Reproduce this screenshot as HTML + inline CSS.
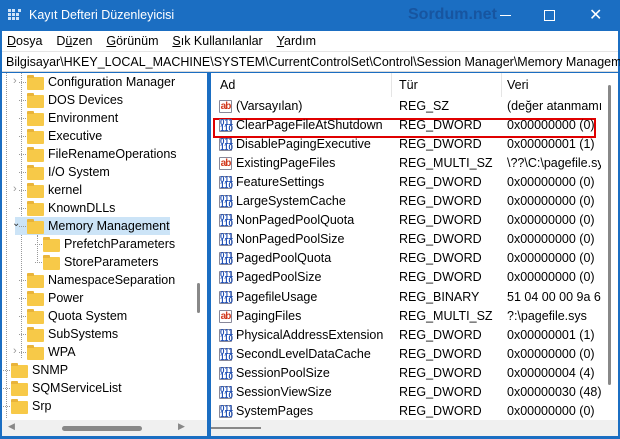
<!DOCTYPE html><html><head><meta charset="utf-8"><style>
*{margin:0;padding:0;box-sizing:border-box}
body{width:620px;height:439px;overflow:hidden;background:#1b6ec2;font-family:"Liberation Sans",sans-serif;font-size:12px;color:#000;position:relative}
.a{position:absolute;white-space:nowrap}
.title{left:0;top:0;width:620px;height:31px;background:#1b6ec2;color:#fff}
.menu{left:2px;top:31px;width:616px;height:20px;background:#fff}
.addr{left:2px;top:51px;width:616px;height:21px;background:#fff;border-top:1px solid #e5e5e5;border-bottom:1px solid #d8d8d8;line-height:20px;padding-left:4px;font-size:12.5px}
.lp{left:2px;top:73px;width:205px;height:363px;background:#fff}
.rp{left:211px;top:73px;width:407px;height:363px;background:#fff}
.f{position:absolute;width:17px;height:13px;background:#f7c948;border-radius:1px}
.f:before{content:"";position:absolute;left:0;top:-2px;width:7px;height:3px;background:#e9b43a;border-radius:1px 1px 0 0}
.t{position:absolute;font-size:12.5px;line-height:18px;white-space:nowrap}
.dot{position:absolute;border-left:1px dotted #999}
.hd{position:absolute;border-top:1px dotted #999}
.ic{position:absolute;width:13px;height:13px;font-size:8px;font-weight:bold;line-height:6px;text-align:center;border:1px solid #889;border-radius:1px;background:#fff;color:#1f4fb5}
.ab{color:#d23a1e;font-size:10px;line-height:11px;letter-spacing:-1px}
</style></head><body>
<div class="a title">
<svg class="a" style="left:8px;top:9px" width="14" height="14"><g fill="#cfe3f8"><rect x="0" y="0" width="3" height="3"/><rect x="4" y="0" width="3" height="3"/><rect x="0" y="4" width="3" height="3"/><rect x="4" y="4" width="3" height="3"/><rect x="8" y="4" width="3" height="3"/><rect x="0" y="8" width="3" height="3"/><rect x="4" y="8" width="3" height="3"/><rect x="8" y="8" width="3" height="3"/><rect x="10" y="0" width="3" height="3"/></g></svg>
<div class="a" style="left:29px;top:8px;font-size:12.5px">Kayıt Defteri Düzenleyicisi</div>
<div class="a" style="left:408px;top:6px;font-size:16px;font-weight:bold;color:#1755a0">Sordum.net</div>
<div class="a" style="left:500px;top:15px;width:11px;border-top:1px solid #fff"></div>
<div class="a" style="left:544px;top:10px;width:11px;height:11px;border:1px solid #fff"></div>
<div class="a" style="left:589px;top:5px;font-size:16px;color:#fff">✕</div>
</div>
<div class="a menu"><div class="a" style="left:5px;top:3px;font-size:12.5px;word-spacing:0"><u>D</u>osya&nbsp;&nbsp;&nbsp;&nbsp;D<u>ü</u>zen&nbsp;&nbsp;&nbsp;&nbsp;<u>G</u>örünüm&nbsp;&nbsp;&nbsp;&nbsp;<u>S</u>ık Kullanılanlar&nbsp;&nbsp;&nbsp;&nbsp;<u>Y</u>ardım</div></div>
<div class="a addr">Bilgisayar\HKEY_LOCAL_MACHINE\SYSTEM\CurrentControlSet\Control\Session Manager\Memory Management</div>
<div class="a lp">
<div class="dot" style="left:19px;top:0;height:285px"></div>
<div class="dot" style="left:4px;top:0;height:345px"></div>
<div class="a" style="left:13px;top:144px;width:155px;height:18px;background:#cce4f7"></div>
<div class="dot" style="left:35px;top:162px;height:26px"></div>
<div class="a" style="left:188px;top:0;width:17px;height:347px;background:#fff"></div>
<div class="a" style="left:195px;top:210px;width:3px;height:30px;background:#888;border-radius:2px"></div>
<div class="a" style="left:0;top:347px;width:205px;height:16px;background:#f0f0f0"></div>
<div class="a" style="left:60px;top:353px;width:80px;height:5px;background:#888;border-radius:3px"></div>
<div class="a" style="left:6px;top:348px;color:#888;font-size:9px">◀</div><div class="a" style="left:176px;top:348px;color:#888;font-size:9px">▶</div>
</div>
<div class="a rp">
<div class="a" style="left:180px;top:0;height:24px;border-left:1px solid #e5e5e5"></div>
<div class="a" style="left:290px;top:0;height:24px;border-left:1px solid #e5e5e5"></div>
<div class="a" style="left:9px;top:5px;font-size:12.5px">Ad</div>
<div class="a" style="left:188px;top:5px;font-size:12.5px">Tür</div>
<div class="a" style="left:296px;top:5px;font-size:12.5px">Veri</div>
<div class="a" style="left:2px;top:45px;width:383px;height:20px;border:2px solid #e00000"></div>
<div class="a" style="left:390px;top:0;width:17px;height:347px;background:#fff"></div>
<div class="a" style="left:397px;top:12px;width:3px;height:300px;background:#888;border-radius:2px"></div>
<div class="a" style="left:0;top:347px;width:407px;height:16px;background:#f0f0f0"></div>
<div class="a" style="left:0;top:354px;width:50px;height:2px;background:#888"></div>
</div>
<div id="tree"></div><div id="list"></div>
<script>
var T=[["Configuration Manager",1,1],["DOS Devices",1,0],["Environment",1,0],["Executive",1,0],["FileRenameOperations",1,0],["I/O System",1,0],["kernel",1,1],["KnownDLLs",1,0],["Memory Management",1,2],["PrefetchParameters",2,0],["StoreParameters",2,0],["NamespaceSeparation",1,0],["Power",1,0],["Quota System",1,0],["SubSystems",1,0],["WPA",1,1],["SNMP",0,1],["SQMServiceList",0,0],["Srp",0,1]];
var h="";T.forEach(function(r,i){var y=73+i*18,fx=[11,27,43][r[1]],tx=[32,48,64][r[1]];
h+='<div class="f" style="left:'+fx+'px;top:'+(y+4)+'px"></div><div class="t" style="left:'+tx+'px;top:'+(y)+'px">'+r[0]+'</div>';
h+='<div class="hd" style="left:'+(fx-8)+'px;top:'+(y+9)+'px;width:7px"></div>';
if(r[2]==1)h+='<div class="a" style="left:'+(fx-14)+'px;top:'+(y+2)+'px;color:#999;font-size:11px">›</div>';
if(r[2]==2)h+='<div class="a" style="left:'+(fx-15)+'px;top:'+(y+1)+'px;color:#333;font-size:10px">⌄</div>';});
document.getElementById("tree").innerHTML=h;
var L=[["(Varsayılan)","REG_SZ","(değer atanmamış)",1],["ClearPageFileAtShutdown","REG_DWORD","0x00000000 (0)"],["DisablePagingExecutive","REG_DWORD","0x00000001 (1)"],["ExistingPageFiles","REG_MULTI_SZ","\\??\\C:\\pagefile.sys",1],["FeatureSettings","REG_DWORD","0x00000000 (0)"],["LargeSystemCache","REG_DWORD","0x00000000 (0)"],["NonPagedPoolQuota","REG_DWORD","0x00000000 (0)"],["NonPagedPoolSize","REG_DWORD","0x00000000 (0)"],["PagedPoolQuota","REG_DWORD","0x00000000 (0)"],["PagedPoolSize","REG_DWORD","0x00000000 (0)"],["PagefileUsage","REG_BINARY","51 04 00 00 9a 6e 00"],["PagingFiles","REG_MULTI_SZ","?:\\pagefile.sys",1],["PhysicalAddressExtension","REG_DWORD","0x00000001 (1)"],["SecondLevelDataCache","REG_DWORD","0x00000000 (0)"],["SessionPoolSize","REG_DWORD","0x00000004 (4)"],["SessionViewSize","REG_DWORD","0x00000030 (48)"],["SystemPages","REG_DWORD","0x00000000 (0)"]];
h="";L.forEach(function(r,i){var y=97+i*19.05;
h+=r[3]?'<div class="ic ab" style="left:219px;top:'+(y+3)+'px">ab</div>':'<div class="ic" style="left:219px;top:'+(y+3)+'px">011<br>110</div>';
h+='<div class="t" style="left:236px;top:'+y+'px">'+r[0]+'</div><div class="t" style="left:399px;top:'+y+'px">'+r[1]+'</div><div class="t" style="left:507px;top:'+y+'px;width:94px;overflow:hidden">'+r[2]+'</div>';});
document.getElementById("list").innerHTML=h;
</script>
</body></html>
